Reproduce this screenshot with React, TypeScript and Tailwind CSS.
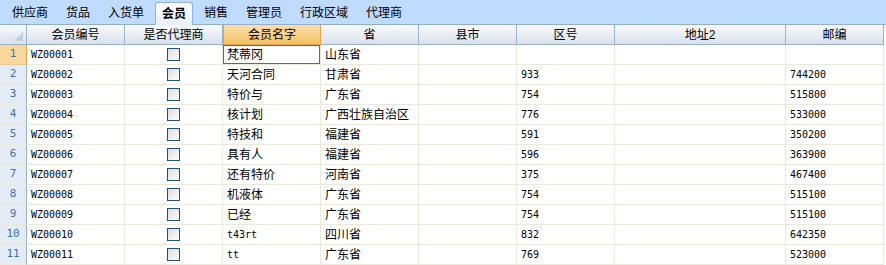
import React from 'react';

const tabs = ['供应商', '货品', '入货单', '会员', '销售', '管理员', '行政区域', '代理商'];

const columns = ['会员编号', '是否代理商', '会员名字', '省', '县市', '区号', '地址2', '邮编'];

const rows = [
    ['WZ00001', '梵蒂冈', '山东省', '', ''],
    ['WZ00002', '天河合同', '甘肃省', '933', '744200'],
    ['WZ00003', '特价与', '广东省', '754', '515800'],
    ['WZ00004', '核计划', '广西壮族自治区', '776', '533000'],
    ['WZ00005', '特技和', '福建省', '591', '350200'],
    ['WZ00006', '具有人', '福建省', '596', '363900'],
    ['WZ00007', '还有特价', '河南省', '375', '467400'],
    ['WZ00008', '机液体', '广东省', '754', '515100'],
    ['WZ00009', '已经', '广东省', '754', '515100'],
    ['WZ00010', 't43rt', '四川省', '832', '642350'],
    ['WZ00011', 'tt', '广东省', '769', '523000'],
];

const Checkbox = () => (
    <div className="w-[13px] h-[13px] border border-[#1c5180] bg-gradient-to-br from-[#dcdcdc] to-[#ffffff]" />
);

const cell = 'h-[20px] border-r border-b border-[#ebe9d9] px-[4px] flex items-center whitespace-nowrap overflow-hidden';
const head = 'h-[20px] border-r border-b border-[#9ab3cd] flex items-center justify-center bg-gradient-to-b from-[#f9fafc] to-[#d9e1ec]';

// latin-only values look like the old bitmap font: narrow and fixed width
const Val = ({ v }: { v: string }) =>
    /^[\x00-\x7f]*$/.test(v)
        ? <span className="font-['DejaVu_Sans_Mono',monospace] text-[10px]">{v}</span>
        : <span>{v}</span>;

const App = () => {
    return (
        <div className="w-[886px] h-[265px] overflow-hidden bg-white text-[12px] text-black font-['Liberation_Sans','Noto_Sans_CJK_SC',sans-serif]">
            {/* tab strip */}
            <div className="h-[25px] bg-[#bfdbfe] border-b border-[#8caedb] flex items-end pl-[3px]">
                {tabs.map(t => (
                    t === '会员' ? (
                        <div key={t} className="h-[23px] -mb-px px-[6px] mx-[2px] flex items-center border border-b-0 border-[#8db2e3] rounded-t-[3px] bg-gradient-to-b from-[#ffffff] to-[#e6f0fc] font-bold">
                            {t}
                        </div>
                    ) : (
                        <div key={t} className="h-[23px] px-[9px] flex items-center">
                            {t}
                        </div>
                    )
                ))}
            </div>

            {/* grid */}
            <div className="grid grid-cols-[27px_98px_98px_98px_98px_98px_98px_171px_98px]">
                <div className={head + ' relative'}>
                    <div className="absolute right-[3px] bottom-[3px] w-0 h-0 border-l-[9px] border-l-transparent border-b-[9px] border-b-[#c2cedc]" />
                </div>
                {columns.map((c, i) => (
                    i === 2 ? (
                        <div key={c} className="h-[20px] border border-t-0 border-[#f2a046] flex items-center justify-center bg-gradient-to-b from-[#fadfab] to-[#f2c264]">
                            {c}
                        </div>
                    ) : (
                        <div key={c} className={head}>{c}</div>
                    )
                ))}

                {rows.map((r, idx) => (
                    <React.Fragment key={r[0]}>
                        <div className={'h-[20px] border-r border-b flex items-center justify-center text-[#3f72ad] font-["DejaVu_Sans_Mono",monospace] text-[11px] ' + (idx === 0 ? 'bg-[#f8d79c] border-r-[#f2a046] border-b-[#f0c98a]' : 'bg-[#e3ebf6] border-r-[#9ab3cd] border-b-[#ebe9d9]')}>
                            {idx + 1}
                        </div>
                        <div className={cell}><Val v={r[0]} /></div>
                        <div className={cell + ' justify-center'}><Checkbox /></div>
                        <div className={cell + (idx === 0 ? ' ring-1 ring-inset ring-[#3a6cc4]' : '')}><Val v={r[1]} /></div>
                        <div className={cell}><Val v={r[2]} /></div>
                        <div className={cell}></div>
                        <div className={cell}><Val v={r[3]} /></div>
                        <div className={cell}></div>
                        <div className={cell}><Val v={r[4]} /></div>
                    </React.Fragment>
                ))}
            </div>
        </div>
    );
};

export default App;
